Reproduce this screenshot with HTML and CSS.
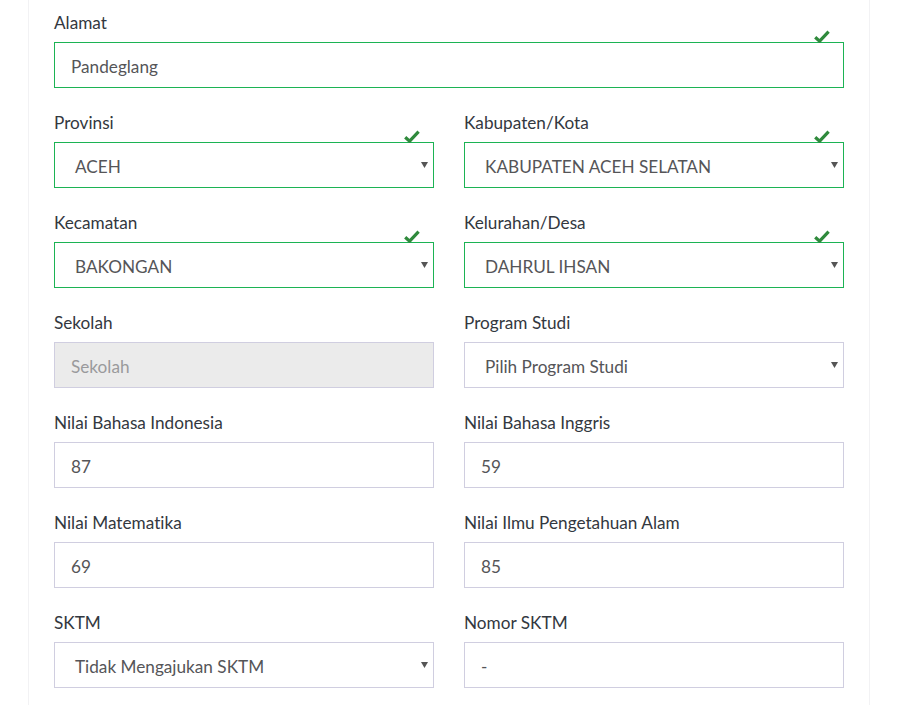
FILE: index.html
```html
<!DOCTYPE html>
<html lang="id">
<head>
<meta charset="utf-8">
<title>Formulir</title>
<link rel="stylesheet" href="styles.css">
</head>
<body>
<div class="panel">
  <div class="row">
    <div class="group valid full">
      <label class="label">Alamat</label>
      <div class="field"><span class="control">Pandeglang</span><svg class="check" viewBox="0 0 16 13" width="16" height="13"><path d="M1.2 7.2 L5.6 11.2 L14.6 1.6" fill="none" stroke="#2f8a3c" stroke-width="3.2"/></svg></div>
    </div>
  </div>
  <div class="row">
    <div class="group valid">
      <label class="label">Provinsi</label>
      <div class="field"><span class="control select">ACEH</span><svg class="check" viewBox="0 0 16 13" width="16" height="13"><path d="M1.2 7.2 L5.6 11.2 L14.6 1.6" fill="none" stroke="#2f8a3c" stroke-width="3.2"/></svg></div>
    </div>
    <div class="group valid">
      <label class="label">Kabupaten/Kota</label>
      <div class="field"><span class="control select">KABUPATEN ACEH SELATAN</span><svg class="check" viewBox="0 0 16 13" width="16" height="13"><path d="M1.2 7.2 L5.6 11.2 L14.6 1.6" fill="none" stroke="#2f8a3c" stroke-width="3.2"/></svg></div>
    </div>
  </div>
  <div class="row">
    <div class="group valid">
      <label class="label">Kecamatan</label>
      <div class="field"><span class="control select">BAKONGAN</span><svg class="check" viewBox="0 0 16 13" width="16" height="13"><path d="M1.2 7.2 L5.6 11.2 L14.6 1.6" fill="none" stroke="#2f8a3c" stroke-width="3.2"/></svg></div>
    </div>
    <div class="group valid">
      <label class="label">Kelurahan/Desa</label>
      <div class="field"><span class="control select">DAHRUL IHSAN</span><svg class="check" viewBox="0 0 16 13" width="16" height="13"><path d="M1.2 7.2 L5.6 11.2 L14.6 1.6" fill="none" stroke="#2f8a3c" stroke-width="3.2"/></svg></div>
    </div>
  </div>
  <div class="row">
    <div class="group">
      <label class="label">Sekolah</label>
      <div class="field"><span class="control disabled">Sekolah</span></div>
    </div>
    <div class="group">
      <label class="label">Program Studi</label>
      <div class="field"><span class="control select">Pilih Program Studi</span></div>
    </div>
  </div>
  <div class="row">
    <div class="group">
      <label class="label">Nilai Bahasa Indonesia</label>
      <div class="field"><span class="control">87</span></div>
    </div>
    <div class="group">
      <label class="label">Nilai Bahasa Inggris</label>
      <div class="field"><span class="control">59</span></div>
    </div>
  </div>
  <div class="row">
    <div class="group">
      <label class="label">Nilai Matematika</label>
      <div class="field"><span class="control">69</span></div>
    </div>
    <div class="group">
      <label class="label">Nilai Ilmu Pengetahuan Alam</label>
      <div class="field"><span class="control">85</span></div>
    </div>
  </div>
  <div class="row">
    <div class="group">
      <label class="label">SKTM</label>
      <div class="field"><span class="control select">Tidak Mengajukan SKTM</span></div>
    </div>
    <div class="group">
      <label class="label">Nomor SKTM</label>
      <div class="field"><span class="control">-</span></div>
    </div>
  </div>
</div>
</body>
</html>
```
FILE: styles.css
```css
html, body {
  margin: 0;
  padding: 0;
  background: #ffffff;
  height: 100%;
}
body {
  font-family: "Lato", "Source Sans Pro", "Liberation Sans", sans-serif;
  font-size: 17px;
  color: #333840;
  overflow: hidden;
  font-variant-ligatures: none;
}
.panel {
  box-sizing: border-box;
  margin-left: 28px;
  width: 842px;
  min-height: 100%;
  padding: 11px 25px 0;
  border-left: 1px solid #f2f2f4;
  border-right: 1px solid #f2f2f4;
  background: #fff;
}
.row {
  display: grid;
  grid-template-columns: 380px 380px;
  column-gap: 30px;
  margin-bottom: 23px;
}
.group.full {
  grid-column: 1 / 3;
}
.label {
  display: block;
  height: 23px;
  line-height: 23px;
  margin-bottom: 8px;
  font-size: 17.2px;
  color: #333840;
}
.field {
  position: relative;
}
.control {
  display: flex;
  align-items: center;
  box-sizing: border-box;
  height: 46px;
  padding: 2px 16px 0;
  border: 1px solid #d0cee0;
  background: #fff;
  color: #555558;
  font-size: 17.2px;
}
.control.select {
  padding-left: 20px;
  background-image: url("data:image/svg+xml;utf8,<svg xmlns='http://www.w3.org/2000/svg' width='7' height='6'><path d='M0 0H7L3.5 6Z' fill='%23555'/></svg>");
  background-repeat: no-repeat;
  background-position: right 5px center;
}
.control.disabled {
  background-color: #ebebeb;
  color: #9a9a9c;
}
.valid .control {
  border-color: #1cb354;
}
.check {
  position: absolute;
  right: 14px;
  top: -12px;
  display: block;
}
```
